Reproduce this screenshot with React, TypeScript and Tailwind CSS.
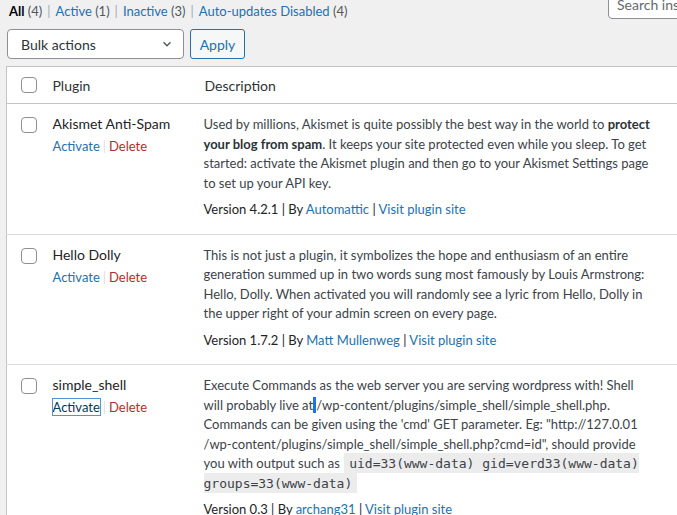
import React from 'react';

type Plugin = {
  name: string;
  version: string;
  author: string;
  description: React.ReactNode;
  focused?: boolean;
  nowrap?: boolean;
};

const plugins: Plugin[] = [
  {
    name: 'Akismet Anti-Spam',
    version: '4.2.1',
    author: 'Automattic',
    description: (
      <>
        Used by millions, Akismet is quite possibly the best way in the world to{' '}
        <strong className="font-bold text-[#2c3338]">protect your blog from spam</strong>. It keeps your site
        protected even while you sleep. To get started: activate the Akismet plugin and then go to your Akismet
        Settings page to set up your API key.
      </>
    ),
  },
  {
    name: 'Hello Dolly',
    version: '1.7.2',
    author: 'Matt Mullenweg',
    description: (
      <>
        This is not just a plugin, it symbolizes the hope and enthusiasm of an entire generation summed up in two
        words sung most famously by Louis Armstrong: Hello, Dolly. When activated you will randomly see a lyric from
        Hello, Dolly in the upper right of your admin screen on every page.
      </>
    ),
  },
  {
    name: 'simple_shell',
    version: '0.3',
    author: 'archang31',
    focused: true,
    nowrap: true,
    // line breaks kept as they fall in the admin screen
    description: (
      <>
        Execute Commands as the web server you are serving wordpress with! Shell
        <br />
        will probably live at
        <span className="inline-block w-[3px] h-[16px] align-[-3px] bg-[#1a73e8]" />
        /wp-content/plugins/simple_shell/simple_shell.php.
        <br />
        Commands can be given using the 'cmd' GET parameter. Eg: "http://127.0.01
        <br />
        /wp-content/plugins/simple_shell/simple_shell.php?cmd=id", should provide
        <br />
        you with output such as{' '}
        <code className="bg-[#ececec] px-[5px] pt-[3px] pb-[2px] mx-px font-['DejaVu_Sans_Mono',monospace] text-[13px] text-[#3c434a]">
          uid=33(www-data) gid=verd33(www-data)
          <br />
          groups=33(www-data)
        </code>
      </>
    ),
  },
];

const Checkbox: React.FC = () => (
  <span className="block w-4 h-4 rounded-[4px] border border-[#8c8f94] bg-white" />
);

const Sep: React.FC = () => <span className="text-[#a7aaad] px-[5px]">|</span>;

export default function App() {
  return (
    <div className="w-[677px] h-[515px] overflow-hidden bg-[#f0f0f1] font-['Lato',sans-serif] text-[13px] text-[#3c434a]">
      {/* filters + search */}
      <div className="flex justify-between items-start h-[21px]">
        <ul className="flex pl-[9px] pt-[2px] leading-[19.5px] whitespace-nowrap">
          <li>
            <span className="font-bold text-black">All</span> <span className="text-[#50575e]">(4)</span>
            <Sep />
          </li>
          <li>
            <span className="text-[#2271b1]">Active</span> <span className="text-[#50575e]">(1)</span>
            <Sep />
          </li>
          <li>
            <span className="text-[#2271b1]">Inactive</span> <span className="text-[#50575e]">(3)</span>
            <Sep />
          </li>
          <li>
            <span className="text-[#2271b1]">Auto-updates Disabled</span> <span className="text-[#50575e]">(4)</span>
          </li>
        </ul>
        <div className="mt-[-11px] w-[200px] h-[30px] shrink-0 ml-auto mr-[-131px] rounded-[4px] border border-[#8c8f94] bg-white pl-[8px] flex items-center text-[14px] text-[#646970]">
          Search installed plugins...
        </div>
      </div>

      {/* bulk actions */}
      <div className="flex gap-[6px] pl-[7px] mt-[8px]">
        <div className="w-[177px] h-[30px] rounded-[4px] border border-[#8c8f94] bg-white flex items-center justify-between pl-[13px] pr-[9px] text-[14px] text-[#2c3338]">
          <span>Bulk actions</span>
          <svg width="14" height="14" viewBox="0 0 20 20" fill="none" stroke="#50575e" strokeWidth="2">
            <path d="M5 7.5l5 5 5-5" />
          </svg>
        </div>
        <div className="w-[55px] h-[30px] rounded-[3px] border border-[#2271b1] bg-[#f6f7f7] flex items-center justify-center text-[14px] text-[#2271b1]">
          Apply
        </div>
      </div>

      {/* table */}
      <table className="mt-[7px] ml-[6px] w-[690px] table-fixed border border-[#c3c4c7] bg-white border-collapse">
        <colgroup>
          <col className="w-[36px]" />
          <col className="w-[151px]" />
          <col />
        </colgroup>
        <thead>
          <tr className="border-b border-[#c3c4c7]">
            <th className="pl-[14px] py-[10px] align-middle">
              <Checkbox />
            </th>
            <th className="pl-[10px] text-left font-normal text-[14px] text-[#2c3338]">Plugin</th>
            <th className="pl-[11px] text-left font-normal text-[14px] text-[#2c3338]">Description</th>
          </tr>
        </thead>
        <tbody>
          {plugins.map((p, i) => (
            <tr key={p.name} className={i > 0 ? 'border-t border-[#dcdcde]' : ''}>
              <th className="pl-[14px] pt-[13px] align-top">
                <Checkbox />
              </th>
              <td className="pl-[10px] pt-[10px] align-top">
                <div className="text-[14px] leading-[20px] text-[#1d2327]">{p.name}</div>
                <div className="mt-[3px] leading-[19.5px] whitespace-nowrap">
                  <span
                    className={
                      p.focused
                        ? 'text-[#043959] outline outline-1 outline-[#4f94d4] outline-offset-0'
                        : 'text-[#2271b1]'
                    }
                  >
                    Activate
                  </span>
                  <span className="text-[#dcdcde] px-[3px]">|</span>
                  <span className="text-[#b32d2e]">Delete</span>
                </div>
              </td>
              <td className="pl-[10px] pr-[35px] pt-[11px] pb-[14px] align-top">
                <p className={p.nowrap ? 'leading-[19.5px] whitespace-nowrap' : 'leading-[19.5px]'}>
                  {p.description}
                </p>
                <div className="mt-[7px] leading-[19.5px] text-[#1d2327]">
                  Version {p.version} | By <span className="text-[#2271b1]">{p.author}</span> |{' '}
                  <span className="text-[#2271b1]">Visit plugin site</span>
                </div>
              </td>
            </tr>
          ))}
        </tbody>
      </table>
    </div>
  );
}
